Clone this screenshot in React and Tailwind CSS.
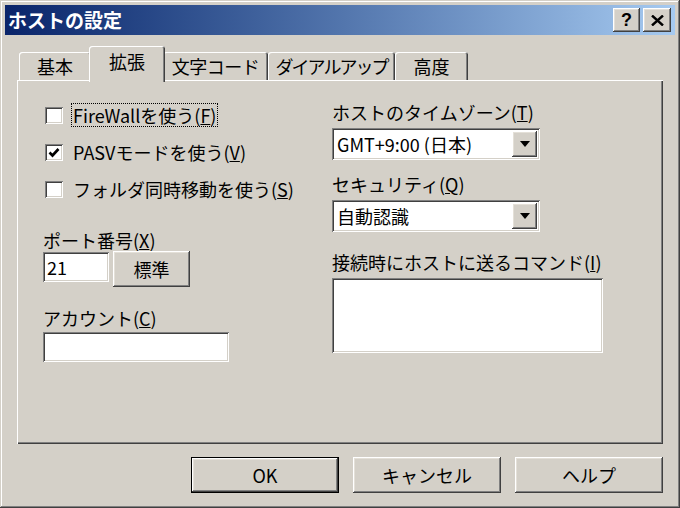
const raised =
  'shadow-[inset_-1px_-1px_#404040,inset_1px_1px_#ffffff,inset_-2px_-2px_#808080,inset_2px_2px_#e4e0d8]'
const sunken =
  'shadow-[inset_1px_1px_#808080,inset_-1px_-1px_#ffffff,inset_2px_2px_#404040,inset_-2px_-2px_#d4d0c8]'

const tabs = [
  { label: '基本', w: 'w-[72px]' },
  { label: '拡張', w: 'w-[76px]', active: true },
  { label: '文字コード', w: 'w-[105px]', track: 'tracking-[-0.5px]' },
  { label: 'ダイアルアップ', w: 'w-[127px]', track: 'tracking-[-2px]' },
  { label: '高度', w: 'w-[73px]' },
]

function Label({ text, k }) {
  return (
    <div className="h-[20px] leading-[20px] whitespace-nowrap">
      {text}(<u>{k}</u>)
    </div>
  )
}

function Checkbox({ checked, text, k, focused }) {
  return (
    <div className="flex items-center h-[24px]">
      <div className={`w-[18px] h-[17px] bg-white ml-[2px] flex items-center justify-center ${sunken}`}>
        {checked && (
          <svg width="12" height="11" viewBox="0 0 12 11">
            <path d="M1.5 5.5 L4.5 8.5 L10.5 2" fill="none" stroke="#000" strokeWidth="2.6" />
          </svg>
        )}
      </div>
      <span
        className={`ml-[8px] px-[1px] h-[24px] leading-[22px] whitespace-nowrap border ${
          focused ? 'border-dotted border-black' : 'border-transparent'
        }`}
      >
        {text}(<u>{k}</u>)
      </span>
    </div>
  )
}

function Combo({ value }) {
  return (
    <div className={`w-[208px] h-[32px] bg-white flex items-center pl-[5px] pr-[3px] ${sunken}`}>
      <span className="flex-1 leading-[20px] whitespace-nowrap">{value}</span>
      <div className={`w-[25px] h-[26px] bg-[#d4d0c8] flex items-center justify-center ${raised}`}>
        <svg width="10" height="6" viewBox="0 0 10 6">
          <path d="M0 0 H10 L5 6 Z" fill="#000" />
        </svg>
      </div>
    </div>
  )
}

function Button({ children, def }) {
  return (
    <div className={`w-[148px] h-[36px] ${def ? 'border border-black' : ''}`}>
      <div className={`w-full h-full bg-[#d4d0c8] flex items-center justify-center ${raised}`}>{children}</div>
    </div>
  )
}

export default function App() {
  return (
    <div
      className="w-[680px] h-[508px] bg-[#d4d0c8] p-[5px] flex flex-col text-[18px] text-black font-['Noto_Sans_CJK_JP','Noto_Sans',sans-serif] shadow-[inset_-1px_-1px_#404040,inset_1px_1px_#d4d0c8,inset_-2px_-2px_#808080,inset_2px_2px_#ffffff]"
    >
      {/* title bar */}
      <div className="h-[30px] flex items-center bg-gradient-to-r from-[#0a246a] to-[#a6caf0] pl-[3px] pr-[4px]">
        <span className="flex-1 text-white font-bold text-[19px] leading-[24px]">ホストの設定</span>
        <div className={`w-[27px] h-[24px] bg-[#d4d0c8] flex items-center justify-center font-bold text-[18px] font-['Liberation_Sans',sans-serif] ${raised}`}>
          ?
        </div>
        <div className={`w-[28px] h-[24px] ml-[3px] bg-[#d4d0c8] flex items-center justify-center ${raised}`}>
          <svg width="13" height="11" viewBox="0 0 13 11">
            <path d="M1 0.5 L12 10.5 M12 0.5 L1 10.5" stroke="#000" strokeWidth="2.4" />
          </svg>
        </div>
      </div>

      <div className="px-[12px] flex flex-col">
        {/* tabs */}
        <div className="h-[34px] mt-[11px] flex items-end pl-[2px] relative z-10">
          {tabs.map(t => (
            <div
              key={t.label}
              className={`${t.w} flex justify-center bg-[#d4d0c8] rounded-t-[3px] shadow-[inset_1px_1px_#ffffff,inset_-1px_0_#404040,inset_-2px_0_#808080] ${
                t.active ? 'h-[36px] -mx-[2px] -mb-[2px] relative z-10 pt-[5px]' : 'h-[28px] pt-[4px]'
              }`}
            >
              <span className={`leading-[20px] whitespace-nowrap ${t.track || ''}`}>{t.label}</span>
            </div>
          ))}
        </div>

        {/* panel */}
        <div className="h-[364px] flex pl-[26px] shadow-[inset_1px_1px_#ffffff,inset_-1px_-1px_#404040,inset_-2px_-2px_#808080]">
          <div className="w-[289px] flex flex-col">
            <div className="mt-[23px]">
              <Checkbox text="FireWallを使う" k="F" focused />
            </div>
            <div className="mt-[13px]">
              <Checkbox checked text="PASVモードを使う" k="V" />
            </div>
            <div className="mt-[13px]">
              <Checkbox text="フォルダ同時移動を使う" k="S" />
            </div>
            <div className="mt-[29px]">
              <Label text="ポート番号" k="X" />
            </div>
            <div className="mt-[1px] flex items-start">
              <div className={`w-[66px] h-[30px] mt-[1px] bg-white pl-[4px] leading-[30px] ${sunken}`}>21</div>
              <div className={`w-[77px] h-[36px] ml-[4px] flex items-center justify-center ${raised}`}>標準</div>
            </div>
            <div className="mt-[21px]">
              <Label text="アカウント" k="C" />
            </div>
            <div className={`mt-[4px] w-[186px] h-[30px] bg-white ${sunken}`} />
          </div>

          <div className="flex flex-col">
            <div className="mt-[22px]">
              <Label text="ホストのタイムゾーン" k="T" />
            </div>
            <div className="mt-[6px]">
              <Combo value="GMT+9:00 (日本)" />
            </div>
            <div className="mt-[14px]">
              <Label text="セキュリティ" k="Q" />
            </div>
            <div className="mt-[6px]">
              <Combo value="自動認識" />
            </div>
            <div className="mt-[20px]">
              <Label text="接続時にホストに送るコマンド" k="I" />
            </div>
            <div className={`mt-[6px] w-[271px] h-[75px] bg-white ${sunken}`} />
          </div>
        </div>

        {/* buttons */}
        <div className="mt-[13px] flex justify-end gap-[14px]">
          <Button def>OK</Button>
          <Button>キャンセル</Button>
          <Button>ヘルプ</Button>
        </div>
      </div>
    </div>
  )
}
